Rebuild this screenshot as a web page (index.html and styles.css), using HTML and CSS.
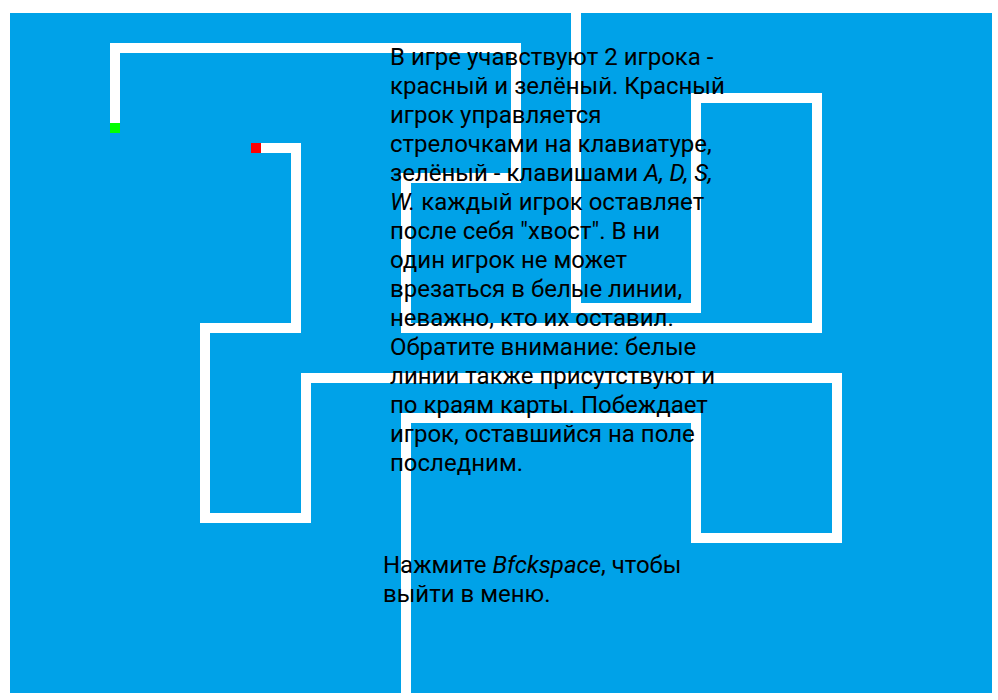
FILE: index.html
```html
<!DOCTYPE html>
<html lang="ru">
<head>
<meta charset="utf-8">
<title>Правила игры</title>
<link rel="stylesheet" href="styles.css">
</head>
<body>
<main class="field">
  <svg class="trails" viewBox="0 0 982 680" aria-hidden="true">
    <path class="trail" d="M105 115V35H506V165H396V315H807V85H686V295H566V0"/>
    <path class="trail" d="M246 135H286V315H195V505H296V365H827V525H686V405H396V680"/>
    <rect class="green" x="100" y="110" width="10" height="10"/>
    <rect class="red" x="241" y="130" width="10" height="10"/>
  </svg>
  <div class="help">
    <p class="rules">В игре учавствуют 2 игрока -<br>
      красный и зелёный. Красный<br>
      игрок управляется<br>
      стрелочками на клавиатуре,<br>
      зелёный - клавишами <em>A, D, S,<br>
      W.</em> каждый игрок оставляет<br>
      после себя "хвост". В ни<br>
      один игрок не может<br>
      врезаться в белые линии,<br>
      неважно, кто их оставил.<br>
      Обратите внимание: белые<br>
      линии также присутствуют и<br>
      по краям карты. Побеждает<br>
      игрок, оставшийся на поле<br>
      последним.</p>
    <p class="exit">Нажмите <em>Bfckspace</em>, чтобы<br>
      выйти в меню.</p>
  </div>
</main>
</body>
</html>
```
FILE: styles.css
```css
body {
  margin: 13px 6px 7px 10px;
  background: #fff;
}

.field {
  display: grid;
  background: #00a2e8;
}

.trails,
.help {
  grid-area: 1 / 1;
}

.trails {
  display: block;
  width: 100%;
  shape-rendering: crispEdges;
}

.trail {
  fill: none;
  stroke: #fff;
  stroke-width: 10px;
}

.green {
  fill: #0f0;
}

.red {
  fill: #f00;
}

.help {
  padding: 30px 0 0 373px;
  color: #000;
  font-family: Roboto, "Liberation Sans", sans-serif;
  font-size: 24px;
  line-height: 29px;
  white-space: nowrap;
}

.rules {
  margin: 0 0 73px 7px;
}

.exit {
  margin: 0;
}
```
